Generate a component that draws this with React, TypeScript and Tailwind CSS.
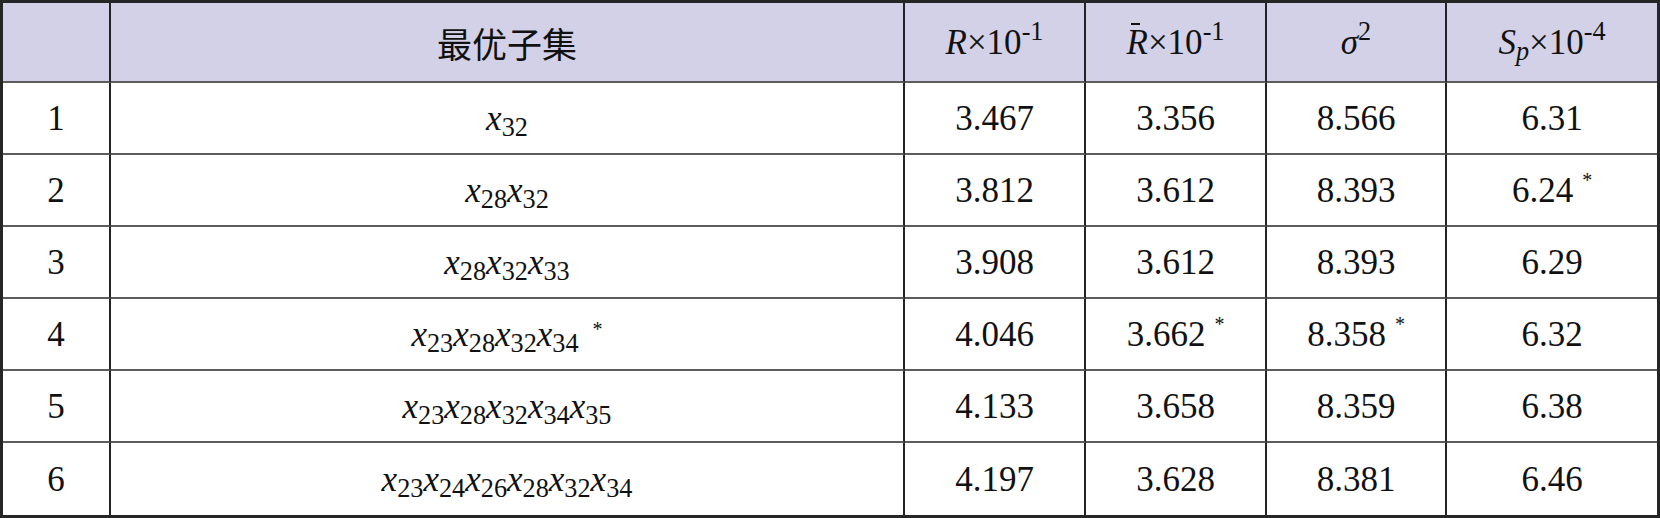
import React from "react";

const X = ({ n }: { n: string }) => (
  <span>
    <i>x</i>
    <sub>{n}</sub>
  </span>
);

const Star = () => <sup className="ml-[9px] text-[20px]">*</sup>;

const Cell = ({
  children,
  last,
  bottom = true,
  header,
}: {
  children?: React.ReactNode;
  last?: boolean;
  bottom?: boolean;
  header?: boolean;
}) => (
  <div
    className={
      "flex items-center justify-center whitespace-nowrap " +
      (last ? "" : "border-r-2 border-r-[#232323] ") +
      (bottom ? "border-b-2 border-b-[#5c5c5c] " : "") +
      (header ? "bg-[#d3d1e7]" : "bg-white")
    }
  >
    {children}
  </div>
);

const rows: { id: string; set: React.ReactNode; r: React.ReactNode; rb: React.ReactNode; s: React.ReactNode; sp: React.ReactNode }[] = [
  { id: "1", set: <X n="32" />, r: "3.467", rb: "3.356", s: "8.566", sp: "6.31" },
  {
    id: "2",
    set: (
      <>
        <X n="28" />
        <X n="32" />
      </>
    ),
    r: "3.812",
    rb: "3.612",
    s: "8.393",
    sp: (
      <>
        6.24
        <Star />
      </>
    ),
  },
  {
    id: "3",
    set: (
      <>
        <X n="28" />
        <X n="32" />
        <X n="33" />
      </>
    ),
    r: "3.908",
    rb: "3.612",
    s: "8.393",
    sp: "6.29",
  },
  {
    id: "4",
    set: (
      <>
        <X n="23" />
        <X n="28" />
        <X n="32" />
        <X n="34" />
        <sup className="ml-[14px] text-[20px]">*</sup>
      </>
    ),
    r: "4.046",
    rb: (
      <>
        3.662
        <Star />
      </>
    ),
    s: (
      <>
        8.358
        <Star />
      </>
    ),
    sp: "6.32",
  },
  {
    id: "5",
    set: (
      <>
        <X n="23" />
        <X n="28" />
        <X n="32" />
        <X n="34" />
        <X n="35" />
      </>
    ),
    r: "4.133",
    rb: "3.658",
    s: "8.359",
    sp: "6.38",
  },
  {
    id: "6",
    set: (
      <>
        <X n="23" />
        <X n="24" />
        <X n="26" />
        <X n="28" />
        <X n="32" />
        <X n="34" />
      </>
    ),
    r: "4.197",
    rb: "3.628",
    s: "8.381",
    sp: "6.46",
  },
];

export default function App() {
  return (
    <div className="w-[1660px] h-[518px] bg-white">
      <div className="box-border w-[1660px] h-[518px] border-[3px] border-[#262626] text-[35px] leading-none text-[#111]">
        <div className="grid grid-cols-[108px_794px_181px_181px_180px_210px] grid-rows-[80px_72px_72px_72px_72px_72px_72px] h-full font-['Liberation_Serif','Times_New_Roman',serif]">
          <Cell header />
          <Cell header>
            <span className="font-['Noto_Sans_CJK_SC',sans-serif] text-[35px] font-normal">最优子集</span>
          </Cell>
          <Cell header>
            <span>
              <i>R</i>×10<sup>-1</sup>
            </span>
          </Cell>
          <Cell header>
            <span>
              <span className="relative inline-block">
                <i>R</i>
                <span className="absolute left-[5px] top-[-2px] w-[9px] h-[2px] bg-[#111]" />
              </span>
              ×10<sup>-1</sup>
            </span>
          </Cell>
          <Cell header>
            <span>
              <i>σ</i>
              <sup>2</sup>
            </span>
          </Cell>
          <Cell header last>
            <span>
              <i>S</i>
              <sub>
                <i>p</i>
              </sub>
              ×10<sup>-4</sup>
            </span>
          </Cell>
          {rows.map((row, i) => {
            const b = i < rows.length - 1;
            return (
              <React.Fragment key={row.id}>
                <Cell bottom={b}>{row.id}</Cell>
                <Cell bottom={b}>
                  <span>{row.set}</span>
                </Cell>
                <Cell bottom={b}>{row.r}</Cell>
                <Cell bottom={b}>{row.rb}</Cell>
                <Cell bottom={b}>{row.s}</Cell>
                <Cell bottom={b} last>
                  {row.sp}
                </Cell>
              </React.Fragment>
            );
          })}
        </div>
      </div>
    </div>
  );
}
